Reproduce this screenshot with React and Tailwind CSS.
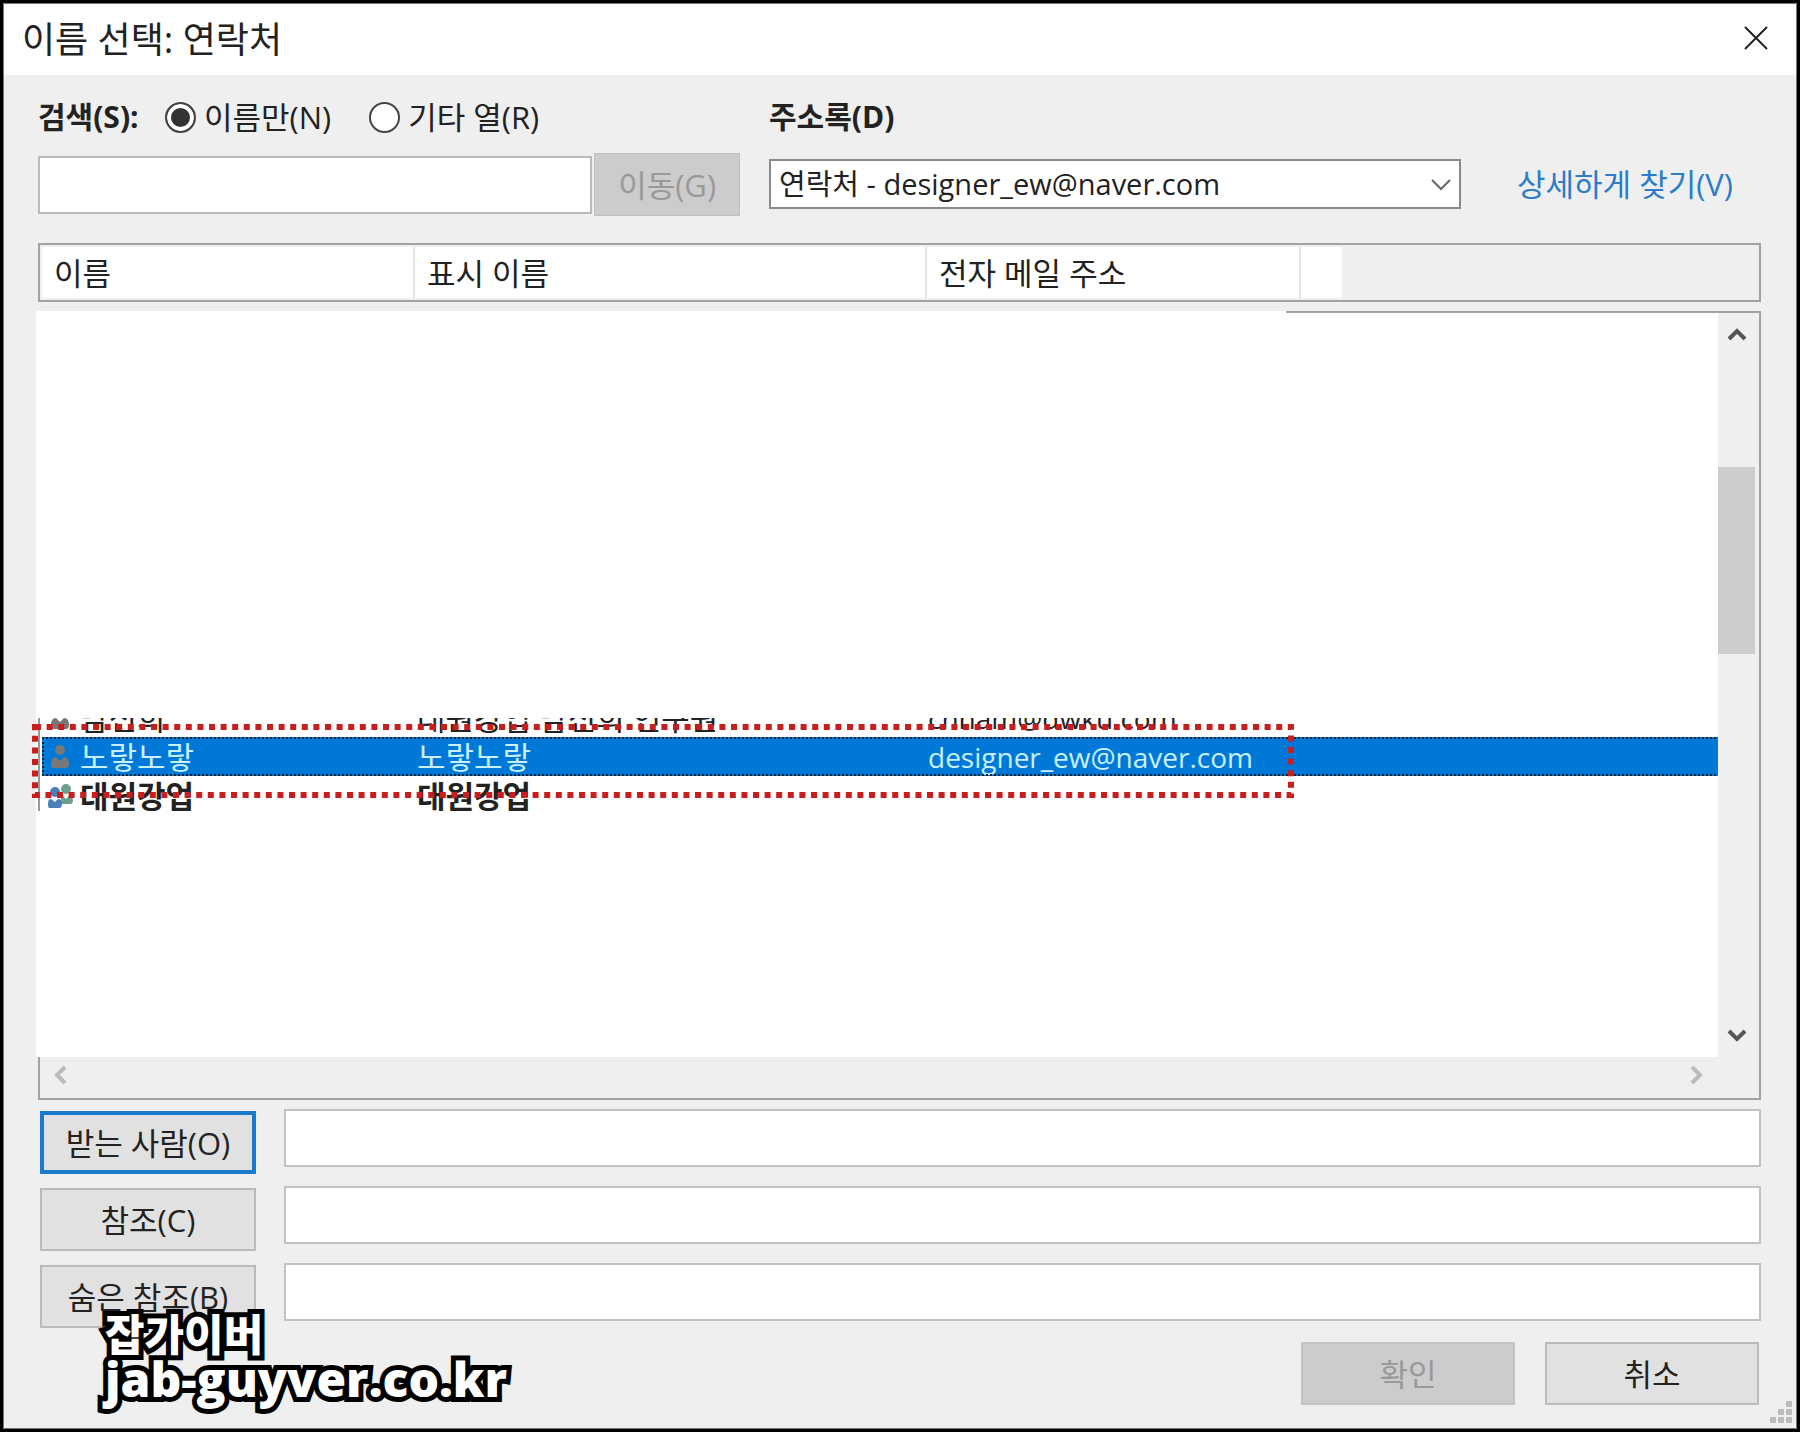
const contacts = [
  { icon: 'person', name: '남신희', display: '대원강업 남신희 연구원', email: 'chnam@dwku.com', look: 'text-[#222]' },
  { icon: 'person', name: '노랗노랗', display: '노랗노랗', email: 'designer_ew@naver.com', selected: true, look: 'text-[#c8f0ff]' },
  { icon: 'group', name: '대원강업', display: '대원강업', email: '', look: 'font-bold text-[#222]' },
];

const recipients = [
  { id: 'to', label: '받는 사람(O)', primary: true },
  { id: 'cc', label: '참조(C)' },
  { id: 'bcc', label: '숨은 참조(B)' },
];

export default function App() {
  return (
    <div className="min-h-screen flex flex-col border-[3px] border-black bg-[#efefef] font-['Open_Sans','Noto_Sans_CJK_KR',sans-serif] text-[31px] leading-9 text-[#222]">
      <div className="flex-1 flex flex-col border border-[#777]">
        <TitleBar />
        <main className="flex-1 flex flex-col pl-[34px] pr-[35px]">
          <SearchBar />
          <ColumnHeader />
          <ContactList />
          <Recipients />
          <Footer />
        </main>
      </div>
    </div>
  );
}

function TitleBar() {
  return (
    <header className="h-[71px] flex items-center justify-between bg-white pl-[18px] pr-7">
      <h1 className="text-[36px]">이름 선택: 연락처</h1>
      <button aria-label="닫기" className="pb-1">
        <svg className="size-6" viewBox="0 0 24 24" fill="none" stroke="#222" strokeWidth="2">
          <path d="M1 1l22 22M23 1L1 23" />
        </svg>
      </button>
    </header>
  );
}

function Radio({ label, checked }) {
  return (
    <label className="flex items-center gap-2">
      <input
        type="radio"
        name="scope"
        defaultChecked={checked}
        className="appearance-none size-[31px] rounded-full border-2 border-[#444] bg-white checked:bg-[#333] checked:shadow-[inset_0_0_0_4px_white]"
      />
      {label}
    </label>
  );
}

function SearchBar() {
  return (
    <div className="flex items-start">
      <div className="w-[702px] shrink-0">
        <div className="flex items-center pt-6">
          <label htmlFor="search" className="w-[127px] font-bold text-[30px]">검색(S):</label>
          <div className="flex gap-[38px]">
            <Radio label="이름만(N)" checked />
            <Radio label="기타 열(R)" />
          </div>
        </div>
        <div className="flex items-center gap-[2px] mt-[18px]">
          <input id="search" className="w-[555px] h-[58px] px-2 border-2 border-[#b8babd] bg-white" />
          <button disabled className="w-[146px] h-[63px] border border-[#bfbfbf] bg-[#ccc] text-[#999]">이동(G)</button>
        </div>
      </div>
      <div className="flex-1 ml-[29px]">
        <div className="pt-6">
          <label htmlFor="book" className="block font-bold text-[30px]">주소록(D)</label>
        </div>
        <div className="flex items-center justify-between mt-6 pr-7">
          <div className="relative w-[692px]">
            <select id="book" className="appearance-none w-full h-[50px] pl-2 border-2 border-[#8a8a8a] bg-white text-[29px]">
              <option>연락처 - designer_ew@naver.com</option>
            </select>
            <svg className="absolute right-[10px] top-5 w-5 h-3 pointer-events-none" viewBox="0 0 20 12" fill="none" stroke="#666" strokeWidth="2">
              <path d="M1 1l9 9 9-9" />
            </svg>
          </div>
          <a href="#find" className="text-[#2b7cc9]">상세하게 찾기(V)</a>
        </div>
      </div>
    </div>
  );
}

function ColumnHeader() {
  return (
    <div className="h-[59px] mt-[27px] p-[2px] flex items-stretch border-2 border-[#a0a2a5]">
      <div className="w-[373px] flex items-center pl-3 border-r-2 border-[#e5e5e5] bg-white">이름</div>
      <div className="w-[512px] flex items-center pl-3 border-r-2 border-[#e5e5e5] bg-white">표시 이름</div>
      <div className="w-[374px] flex items-center pl-3 border-r-2 border-[#e5e5e5] bg-white">전자 메일 주소</div>
      <div className="w-[41px] bg-white" />
    </div>
  );
}

function Chevron({ className, d, color }) {
  return (
    <svg className={className} viewBox="0 0 20 20" fill="none" stroke={color} strokeWidth="4">
      <path d={d} />
    </svg>
  );
}

function PersonIcon() {
  return (
    <svg className="w-[18px] h-6" viewBox="0 0 18 24" fill="#777">
      <circle cx="9" cy="5" r="5" />
      <path d="M2 23q-2-1-2-4 0-7 5-7l4 4 4-4q5 0 5 7 0 3-2 4z" />
    </svg>
  );
}

function GroupIcon() {
  return (
    <svg className="w-[26px] h-6" viewBox="0 0 26 24">
      <g fill="#6fa08c">
        <circle cx="18" cy="5" r="5" />
        <path d="M13 20q-1-8 2-8l3 3 3-3q4 0 4 5 0 2-2 3z" />
      </g>
      <g fill="#4a7fb8">
        <circle cx="7" cy="8" r="5" />
        <path d="M1 24q-1-1-1-4 0-5 3-5l4 3 3-3q4 0 4 5 0 3-2 4z" />
      </g>
    </svg>
  );
}

function ContactRow({ contact }) {
  return (
    <tr className={`h-[39px] ${contact.look} ${contact.selected ? 'bg-[#0078d7] outline-2 -outline-offset-2 outline-dotted outline-[#222]' : ''}`}>
      <td className="w-[38px] p-0 pl-[6px]">
        {contact.icon === 'group' ? <GroupIcon /> : <div className="pl-[3px]"><PersonIcon /></div>}
      </td>
      <td className="w-[337px] p-0 leading-[38px]">{contact.name}</td>
      <td className="w-[511px] p-0 leading-[38px]">{contact.display}</td>
      <td className="p-0 text-[28px] leading-[38px]">{contact.email}</td>
    </tr>
  );
}

function ContactList() {
  return (
    <div className="relative mt-[9px] -ml-[2px] flex flex-col border-r-2 border-[#a0a2a5]">
      <div className="flex">
        <div className="flex-1 bg-white pt-[407px] pb-[246px]">
          {/* only a strip of the list is uncovered */}
          <div className="relative">
            <div className="h-[93px] ml-[2px] flex flex-col overflow-hidden border-l-2 border-[#999]">
              <table className="w-full -mt-5 ml-[2px] border-collapse table-fixed">
                <tbody>
                  {contacts.map((contact) => (
                    <ContactRow key={contact.email + contact.name} contact={contact} />
                  ))}
                </tbody>
              </table>
            </div>
            <svg className="absolute -left-1 top-[6px] w-[1262px] h-[74px]" fill="none" stroke="#c81e1e" strokeWidth="6" strokeDasharray="6 5.6">
              <rect x="3" y="3" width="1256" height="68" />
            </svg>
          </div>
        </div>
        <div className="w-[41px] flex flex-col items-center justify-between pt-[14px] pb-3 pr-1">
          <Chevron className="size-5" color="#555" d="M2 14l8-8 8 8" />
          <div className="w-[37px] h-[187px] mb-[250px] bg-[#cdcdcd]" />
          <Chevron className="size-5" color="#555" d="M2 6l8 8 8-8" />
        </div>
      </div>
      <div className="h-[43px] ml-[2px] pl-3 pr-[54px] pb-[5px] flex items-center justify-between border-l-2 border-b-2 border-[#a0a2a5]">
        <Chevron className="size-5" color="#bbb" d="M13 2l-8 8 8 8" />
        <Chevron className="size-5" color="#bbb" d="M7 2l8 8-8 8" />
      </div>
      <div className="absolute top-0 right-0 w-[473px] h-[2px] bg-[#a0a2a5]" />
    </div>
  );
}

function Recipients() {
  return (
    <div className="flex flex-col gap-3 mt-[9px]">
      {recipients.map((r) => (
        <div key={r.id} className="flex items-start pl-[2px]">
          <button
            className={`w-[216px] h-[63px] mt-[2px] bg-[#e1e1e1] ${r.primary ? 'border-4 border-[#1979ca]' : 'border-2 border-[#bababa]'}`}
          >
            {r.label}
          </button>
          <input aria-label={r.label} className="flex-1 h-[58px] ml-7 px-2 border-2 border-[#c0c2c4] bg-white" />
        </div>
      ))}
    </div>
  );
}

function Footer() {
  return (
    <footer className="relative flex justify-end gap-[30px] mt-[14px] pr-[2px]">
      <button disabled className="w-[214px] h-[63px] border-2 border-[#c4c4c4] bg-[#ccc] text-[#999]">확인</button>
      <button className="w-[214px] h-[63px] border-2 border-[#bababa] bg-[#e1e1e1]">취소</button>
      <p className="absolute left-[67px] -top-[30px] text-[43px] leading-[46px] font-black [-webkit-text-stroke:10px_black] [paint-order:stroke_fill] [stroke-linejoin:round] text-white">
        잡가이버
        <span className="block text-[48px] leading-[42px]">jab-guyver.co.kr</span>
      </p>
      <svg className="absolute -right-[31px] -bottom-[18px] size-[22px]" viewBox="0 0 22 22" fill="#bdbdbd">
        <path d="M16 0h6v6h-6zM8 8h6v6h-6zM16 8h6v6h-6zM0 16h6v6h-6zM8 16h6v6h-6zM16 16h6v6h-6z" />
      </svg>
    </footer>
  );
}
